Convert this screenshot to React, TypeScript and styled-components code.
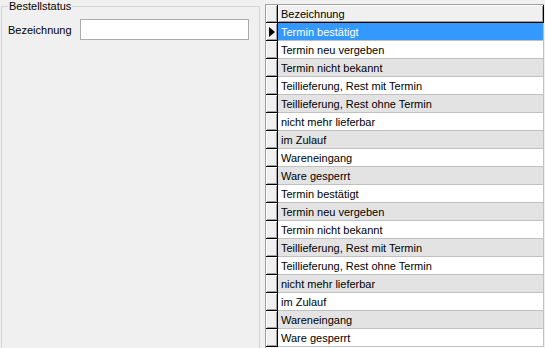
import { FC } from "react";
import styled, { createGlobalStyle } from "styled-components";

const GlobalStyle = createGlobalStyle`
  body {
    margin: 0;
    background-color: #f0f0f0;
    font-family: "Liberation Sans", Arial, sans-serif;
    font-size: 11px;
    color: #000;
  }
`;

const WindowStyled = styled.div`
  display: flex;
  width: 545px;
  height: 348px;
  overflow: hidden;
  background-color: #f0f0f0;
`;

const GroupBoxStyled = styled.fieldset`
  box-sizing: border-box;
  width: 259px;
  height: 360px;
  margin: 0 0 0 1px;
  padding: 0 6px;
  border: 1px solid #d5d5d5;
  min-width: 0;
`;

const LegendStyled = styled.legend`
  padding: 0 1px;
  margin-left: 0;
  line-height: 12px;
  font-size: 11px;
`;

const FieldRowStyled = styled.div`
  display: flex;
  align-items: center;
  margin-top: 7px;
`;

const LabelStyled = styled.label`
  width: 72px;
  flex-shrink: 0;
`;

const InputStyled = styled.input`
  box-sizing: border-box;
  width: 169px;
  height: 21px;
  margin: 0;
  padding: 0 3px;
  border: 1px solid #ababab;
  background-color: #fff;
  font-family: "Liberation Sans", Arial, sans-serif;
  font-size: 11px;
  outline: none;
`;

const GridStyled = styled.div`
  display: grid;
  grid-template-columns: 12px 266px;
  grid-auto-rows: 18px;
  align-content: start;
  margin: 4px 0 0 5px;
  border-top: 1px solid #a0a0a0;
  border-left: 1px solid #a0a0a0;
  background-color: #fff;
`;

const CornerCellStyled = styled.div`
  box-sizing: border-box;
  background-color: #f0f0f0;
  border-right: 1px solid #000;
  border-bottom: 1px solid #000;
  box-shadow: inset 1px 1px 0 #fff, inset -1px -1px 0 #a0a0a0;
`;

const HeaderCellStyled = styled.div`
  box-sizing: border-box;
  display: flex;
  align-items: center;
  padding-left: 3px;
  background-color: #f0f0f0;
  border-right: 1px solid #000;
  border-bottom: 1px solid #000;
  box-shadow: inset 1px 1px 0 #fff, inset -1px -1px 0 #a0a0a0;
`;

const RowHeaderStyled = styled.div`
  box-sizing: border-box;
  display: flex;
  align-items: center;
  justify-content: center;
  background-color: #f0f0f0;
  border-right: 1px solid #000;
  border-bottom: 1px solid #000;
  box-shadow: inset 1px 1px 0 #fff, inset -1px -1px 0 #a0a0a0;
`;

type Tone = "selected" | "gray" | "white";

const toneColors: Record<Tone, string> = {
  selected: "#3399ff",
  gray: "#e3e3e3",
  white: "#ffffff",
};

const DataCellStyled = styled.div<{ $tone: Tone }>`
  box-sizing: border-box;
  display: flex;
  align-items: center;
  padding-left: 3px;
  white-space: nowrap;
  overflow: hidden;
  background-color: ${(p) => toneColors[p.$tone]};
  color: ${(p) => (p.$tone === "selected" ? "#fff" : "#000")};
  border-right: 1px solid #c0c0c0;
  border-bottom: 1px solid #c0c0c0;
`;

const statuses = [
  "Termin bestätigt",
  "Termin neu vergeben",
  "Termin nicht bekannt",
  "Teillieferung, Rest mit Termin",
  "Teillieferung, Rest ohne Termin",
  "nicht mehr lieferbar",
  "im Zulauf",
  "Wareneingang",
  "Ware gesperrt",
];

const rows = [...statuses, ...statuses];

const CurrentRowArrow: FC = () => (
  <svg width="6" height="10" viewBox="0 0 6 10">
    <polygon points="0,0 6,5 0,10" fill="#000" />
  </svg>
);

const App: FC = () => {
  return (
    <>
      <GlobalStyle />
      <WindowStyled>
        <GroupBoxStyled>
          <LegendStyled>Bestellstatus</LegendStyled>
          <FieldRowStyled>
            <LabelStyled>Bezeichnung</LabelStyled>
            <InputStyled type="text" />
          </FieldRowStyled>
        </GroupBoxStyled>
        <GridStyled>
          <CornerCellStyled />
          <HeaderCellStyled>Bezeichnung</HeaderCellStyled>
          {rows.map((text, i) => {
            const tone: Tone = i === 0 ? "selected" : i % 2 === 0 ? "gray" : "white";
            return [
              <RowHeaderStyled key={`h${i}`}>{i === 0 && <CurrentRowArrow />}</RowHeaderStyled>,
              <DataCellStyled key={`d${i}`} $tone={tone}>
                {text}
              </DataCellStyled>,
            ];
          })}
        </GridStyled>
      </WindowStyled>
    </>
  );
};

export default App;
